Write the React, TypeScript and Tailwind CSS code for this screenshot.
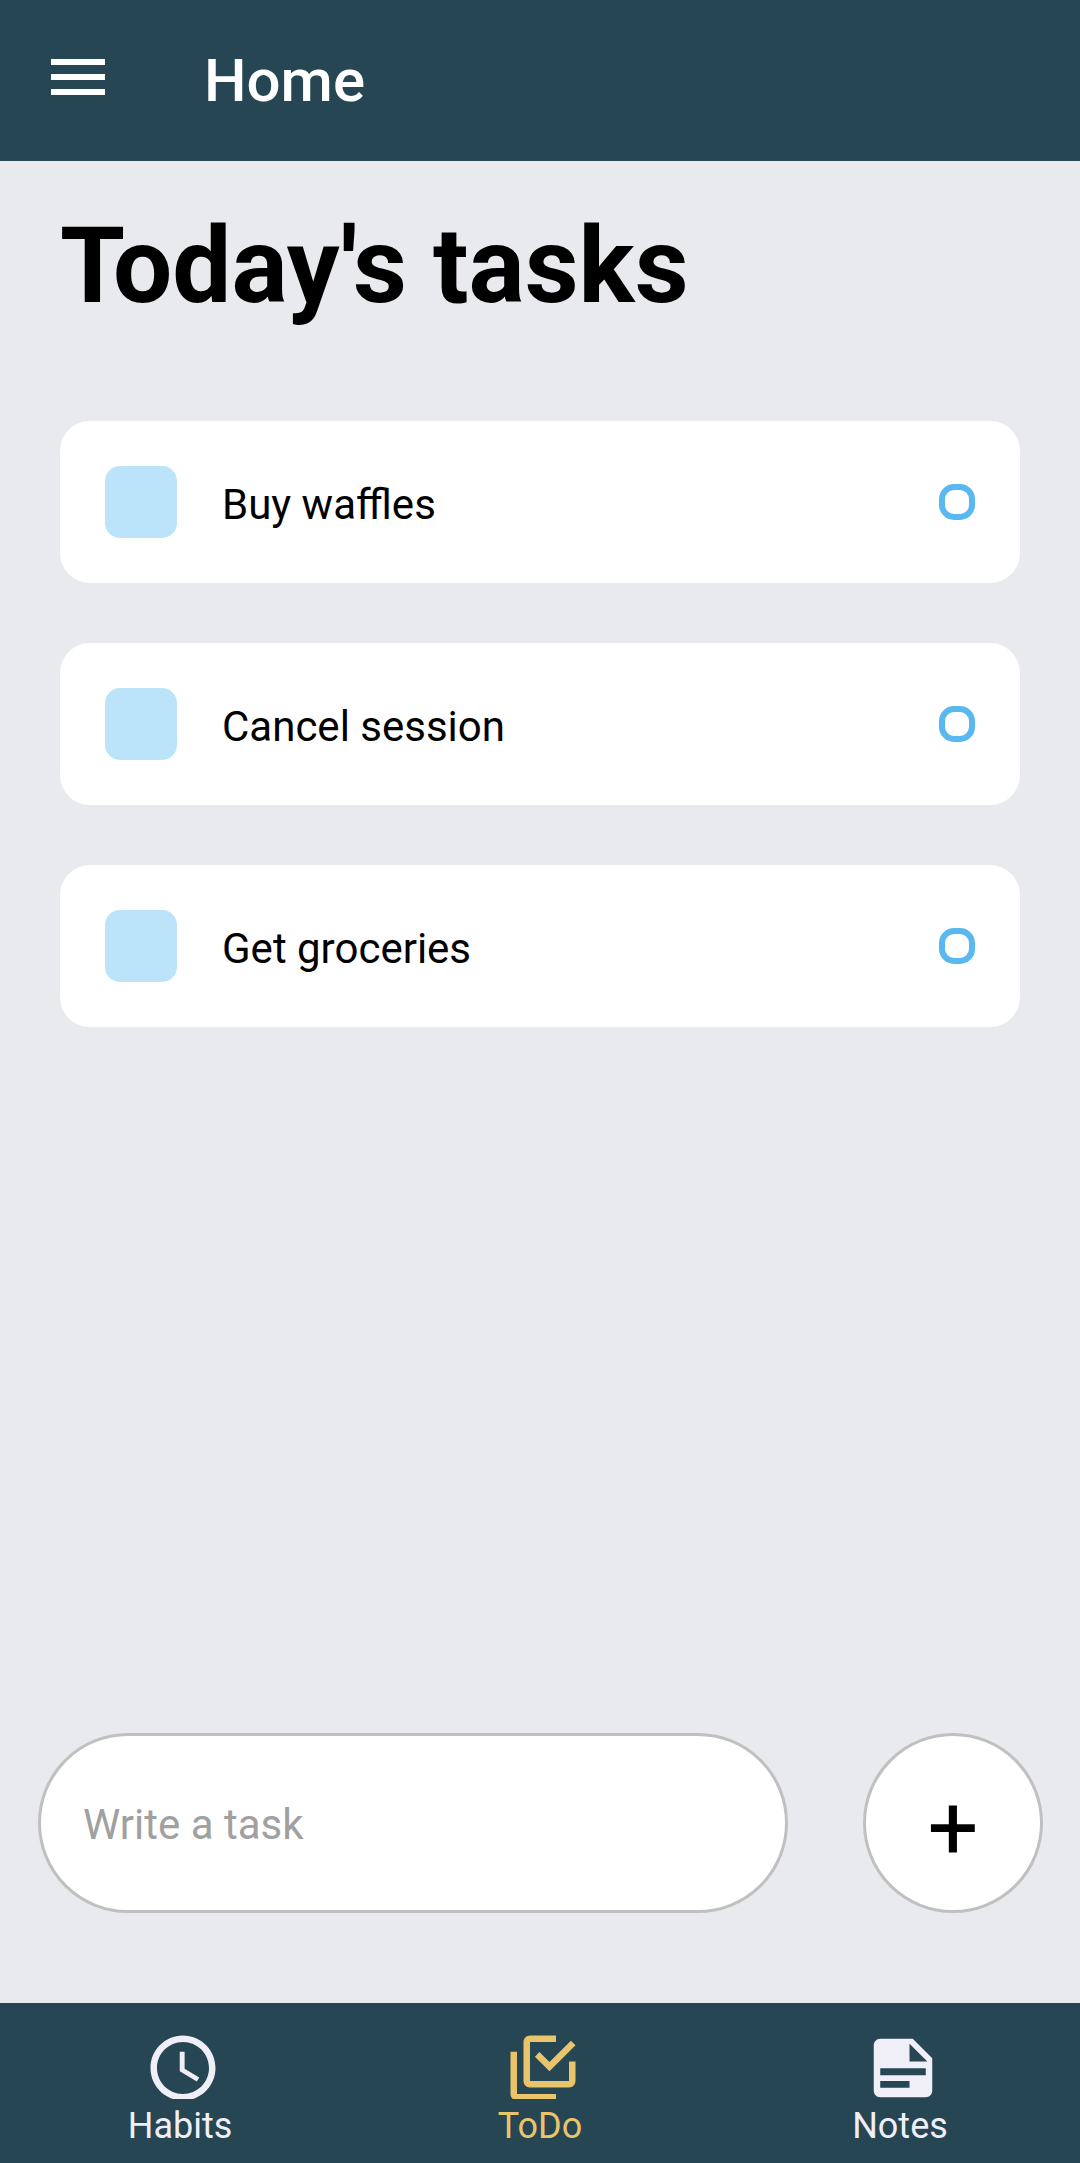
import React from "react";

const tasks = ["Buy waffles", "Cancel session", "Get groceries"];

function Task({ text }: { text: string }) {
  return (
    <div className="flex h-[162px] items-center rounded-[30px] bg-white px-[45px]">
      <div className="size-[72px] rounded-[15px] bg-[#bbe4fa]" />
      <span className="ml-[45px] flex-1 pt-[6px] text-[42px] leading-[50px] text-black">{text}</span>
      <div className="size-9 rounded-[15px] border-[6px] border-[#5ab8f0]" />
    </div>
  );
}

function Tab({ label, active, children }: { label: string; active?: boolean; children: React.ReactNode }) {
  return (
    <div className={active ? "flex flex-1 flex-col items-center text-[#e9c46a]" : "flex flex-1 flex-col items-center text-[#f0eef6]"}>
      <div className="mt-6 size-[72px] overflow-hidden">
        <svg viewBox="0 0 24 24" fill="currentColor" className="mt-[1.5px] -ml-[0.5px] size-[78px] max-w-none">{children}</svg>
      </div>
      <span className="mt-[6px] text-[36px] leading-[42px]">{label}</span>
    </div>
  );
}

export default function App() {
  return (
    <div className="flex h-[2163px] w-[1080px] flex-col overflow-hidden bg-[#e8eaed] font-['Roboto',sans-serif]">
      <header className="flex h-[161px] shrink-0 items-center bg-[#264653] text-white">
        <svg viewBox="0 0 24 24" fill="currentColor" className="mt-[41px] ml-[42px] size-[72px] self-start">
          <path d="M3 18h18v-2H3v2zm0-5h18v-2H3v2zm0-7v2h18V6H3z" />
        </svg>
        <h1 className="ml-[90px] text-[60px] font-medium">Home</h1>
      </header>
      <main className="flex flex-1 flex-col px-[60px] pt-[44px]">
        <h2 className="text-[105px] leading-[123px] font-bold text-black">
          <span className="tracking-[-12px]">T</span>oday's tasks
        </h2>
        <div className="mt-[93px] flex flex-col gap-[60px]">
          {tasks.map((t) => <Task key={t} text={t} />)}
        </div>
      </main>
      <div className="mb-[90px] flex justify-between pr-[37px] pl-[38px]">
        <div className="flex h-[180px] w-[750px] items-center rounded-full border-[3px] border-[#c0c0c0] bg-white pt-[3px] pl-[42px] text-[42px] text-[#a0a0a0]">Write a task</div>
        <div className="flex size-[180px] items-center justify-center rounded-full border-[3px] border-[#c0c0c0] bg-white pt-[11px] text-[90px] text-black">+</div>
      </div>
      <nav className="flex h-[160px] shrink-0 bg-[#264653]">
        <Tab label="Habits">
          <path d="M11.99 2C6.47 2 2 6.48 2 12s4.47 10 9.99 10C17.52 22 22 17.52 22 12S17.52 2 11.99 2zM12 20c-4.42 0-8-3.58-8-8s3.58-8 8-8 8 3.58 8 8-3.58 8-8 8zm.5-13H11v6l5.25 3.15.75-1.23-4.5-2.67z" />
        </Tab>
        <Tab label="ToDo" active>
          <path d="M20 16V10h2v6c0 1.1-.9 2-2 2H8c-1.1 0-2-.9-2-2V4c0-1.1.9-2 2-2h8v2H8v12h12zM10.91 7.08L14 10.17l6.59-6.59L22 5l-8 8-4.5-4.5 1.41-1.42zM16 20v2H4c-1.1 0-2-.9-2-2V7h2v13h12z" />
        </Tab>
        <Tab label="Notes">
          <path fillRule="evenodd" d="M15 3H5c-1.1 0-2 .9-2 2v14c0 1.1.9 2 2 2h14c1.1 0 2-.9 2-2V9l-6-6zM14 10V4.5l5.5 5.5H14zM5 12.1h14v2.1H5v-2.1zM5 16h9v2.1H5V16z" />
        </Tab>
      </nav>
    </div>
  );
}
